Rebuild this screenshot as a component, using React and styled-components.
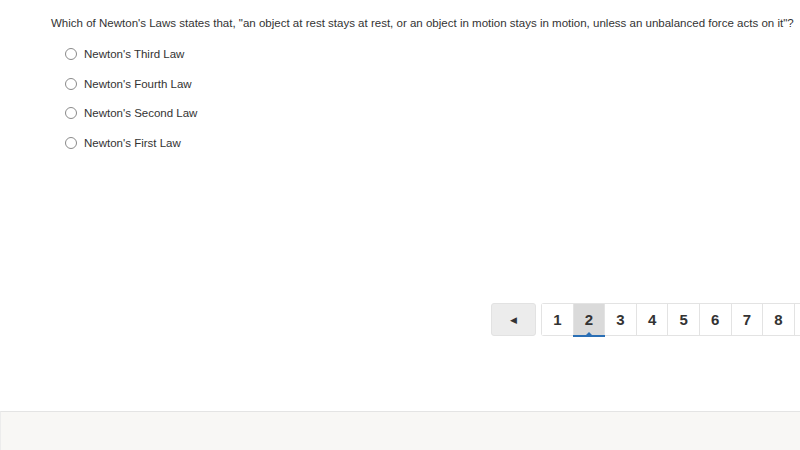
import React from "react";
import styled, { createGlobalStyle } from "styled-components";

const Global = createGlobalStyle`
  html, body { margin: 0; padding: 0; background: #fff; }
  body { font-family: "Liberation Sans", Arial, sans-serif; color: #333; }
`;

const Page = styled.div`
  width: 800px;
  height: 450px;
  display: flex;
  flex-direction: column;
  overflow: hidden;
`;

const Main = styled.div`
  height: 411px;
  flex: none;
  display: flex;
  flex-direction: column;
  padding: 16px 0 0 51px;
  box-sizing: border-box;
`;

const Question = styled.div`
  font-size: 11.52px;
  line-height: 14px;
  color: #333;
  white-space: nowrap;
`;

const Options = styled.div`
  display: flex;
  flex-direction: column;
  gap: 15.7px;
  margin-top: 17px;
  padding-left: 14px;
`;

const Option = styled.label`
  display: flex;
  align-items: center;
  gap: 7px;
  font-size: 11.5px;
  line-height: 14px;
  color: #333;
`;

const Radio = styled.span`
  width: 10px;
  height: 10px;
  border: 1px solid #8a8a8a;
  border-radius: 50%;
  background: #fff;
  flex: none;
`;

const Pager = styled.div`
  display: flex;
  align-items: stretch;
  margin-top: 153px;
  margin-left: 440px;
  height: 33px;
  width: 600px;
  flex: none;
`;

const PrevButton = styled.div`
  width: 45px;
  flex: none;
  background: #ececec;
  border: 1px solid #e2e2e2;
  border-radius: 3px;
  box-sizing: border-box;
  display: flex;
  align-items: center;
  justify-content: center;
  margin-right: 5px;
  font-size: 9px;
  color: #333;
`;

const Cells = styled.div`
  display: flex;
  flex: none;
  border: 1px solid #e3e3e3;
  border-right: none;
  border-radius: 3px 0 0 3px;
`;

const Cell = styled.div`
  position: relative;
  width: 31.6px;
  flex: none;
  box-sizing: border-box;
  border-right: 1px solid #e3e3e3;
  display: flex;
  align-items: center;
  justify-content: center;
  font-size: 15px;
  font-weight: bold;
  color: #333;
  background: ${(p) => (p.$active ? "#dadada" : "#fff")};
`;

const Underline = styled.span`
  position: absolute;
  left: -1px;
  right: -1px;
  bottom: -2px;
  height: 2px;
  background: #2a6fb5;
  &::before {
    content: "";
    position: absolute;
    left: 50%;
    top: -3px;
    margin-left: -3px;
    border-left: 3px solid transparent;
    border-right: 3px solid transparent;
    border-bottom: 3px solid #2a6fb5;
  }
`;

const Footer = styled.div`
  height: 38px;
  flex: none;
  background: #f8f7f5;
  border-top: 1px solid #e4e4e4;
  border-left: 1px solid #ececec;
`;

const options = [
  "Newton's Third Law",
  "Newton's Fourth Law",
  "Newton's Second Law",
  "Newton's First Law",
];

export default function App() {
  return (
    <Page>
      <Global />
      <Main>
        <Question>
          Which of Newton's Laws states that, "an object at rest stays at rest, or an object in motion stays in motion, unless an unbalanced force acts on it"?
        </Question>
        <Options>
          {options.map((o) => (
            <Option key={o}>
              <Radio />
              {o}
            </Option>
          ))}
        </Options>
        <Pager>
          <PrevButton>◀</PrevButton>
          <Cells>
            {[1, 2, 3, 4, 5, 6, 7, 8].map((n) => (
              <Cell key={n} $active={n === 2}>
                {n}
                {n === 2 && <Underline />}
              </Cell>
            ))}
            <Cell aria-hidden="true" />
          </Cells>
        </Pager>
      </Main>
      <Footer />
    </Page>
  );
}
